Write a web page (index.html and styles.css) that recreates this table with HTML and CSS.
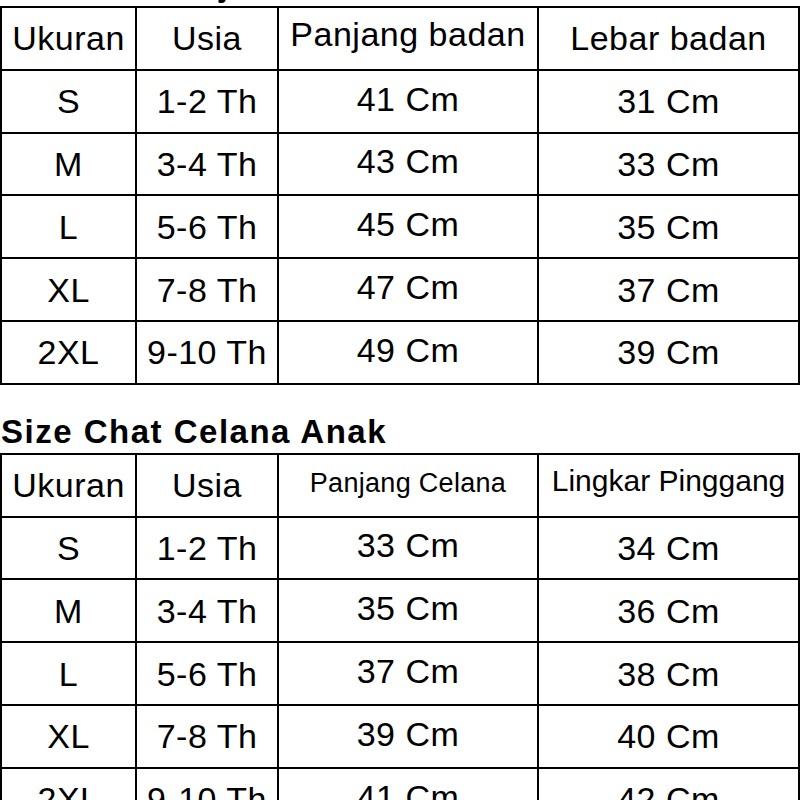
FILE: index.html
```html
<!DOCTYPE html>
<html lang="id">
<head>
<meta charset="utf-8">
<title>Size Chart Anak</title>
<link rel="stylesheet" href="styles.css">
</head>
<body>
<section class="chart chart-first">
  <h2 class="chart-title">Size Chat Baju Anak</h2>
  <table class="size-table">
    <colgroup>
      <col class="c-size"><col class="c-age"><col class="c-m1"><col class="c-m2">
    </colgroup>
    <thead>
      <tr><th>Ukuran</th><th>Usia</th><th class="raise-5">Panjang badan</th><th>Lebar badan</th></tr>
    </thead>
    <tbody>
      <tr><td>S</td><td>1-2 Th</td><td class="raise-3">41 Cm</td><td>31 Cm</td></tr>
      <tr><td>M</td><td>3-4 Th</td><td class="raise-3">43 Cm</td><td>33 Cm</td></tr>
      <tr><td>L</td><td>5-6 Th</td><td class="raise-3">45 Cm</td><td>35 Cm</td></tr>
      <tr><td>XL</td><td>7-8 Th</td><td class="raise-3">47 Cm</td><td>37 Cm</td></tr>
      <tr><td>2XL</td><td>9-10 Th</td><td class="raise-3">49 Cm</td><td>39 Cm</td></tr>
    </tbody>
  </table>
</section>
<section class="chart">
  <h2 class="chart-title">Size Chat Celana Anak</h2>
  <table class="size-table">
    <colgroup>
      <col class="c-size"><col class="c-age"><col class="c-m1"><col class="c-m2">
    </colgroup>
    <thead>
      <tr><th>Ukuran</th><th>Usia</th><th class="small-head raise-2">Panjang Celana</th><th class="mid-head raise-4">Lingkar Pinggang</th></tr>
    </thead>
    <tbody>
      <tr><td>S</td><td>1-2 Th</td><td class="raise-3">33 Cm</td><td>34 Cm</td></tr>
      <tr><td>M</td><td>3-4 Th</td><td class="raise-3">35 Cm</td><td>36 Cm</td></tr>
      <tr><td>L</td><td>5-6 Th</td><td class="raise-3">37 Cm</td><td>38 Cm</td></tr>
      <tr><td>XL</td><td>7-8 Th</td><td class="raise-3">39 Cm</td><td>40 Cm</td></tr>
      <tr><td>2XL</td><td>9-10 Th</td><td class="raise-3">41 Cm</td><td>42 Cm</td></tr>
    </tbody>
  </table>
</section>
</body>
</html>
```
FILE: styles.css
```css
html, body {
  margin: 0;
  padding: 0;
  background: #ffffff;
}

body {
  font-family: "Liberation Sans", Arial, sans-serif;
  color: #000000;
  overflow: hidden;
}

.chart-first {
  margin-top: -33px;
}

.chart + .chart {
  margin-top: 29px;
}

.chart-title {
  margin: 0 0 3px 1px;
  font-size: 33px;
  line-height: 36px;
  font-weight: 700;
  letter-spacing: 1.5px;
  white-space: nowrap;
}

.size-table {
  width: 800px;
  border-collapse: collapse;
  table-layout: fixed;
}

.c-size { width: 135px; }
.c-age { width: 142px; }
.c-m1 { width: 260px; }
.c-m2 { width: 261px; }

.size-table tr {
  height: 62.8px;
}

.size-table th,
.size-table td {
  border: 2px solid #000000;
  padding: 0;
  text-align: center;
  vertical-align: middle;
  font-size: 34px;
  font-weight: 400;
  line-height: 40px;
  letter-spacing: 0.5px;
  white-space: nowrap;
  overflow: hidden;
}

.size-table .small-head {
  font-size: 27px;
  letter-spacing: 0.3px;
}

.size-table .mid-head {
  font-size: 30px;
  letter-spacing: 0;
}

.size-table .raise-2 { padding-bottom: 4px; }
.size-table .raise-3 { padding-bottom: 5px; }
.size-table .raise-4 { padding-bottom: 8px; }
.size-table .raise-5 { padding-bottom: 9px; }
```
